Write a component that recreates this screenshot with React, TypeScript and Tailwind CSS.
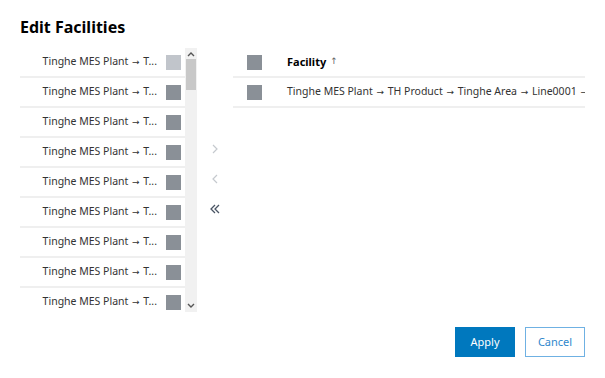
import React from "react";

const ROWS = Array.from({ length: 9 }, (_, i) => i);

function Box({ light = false }: { light?: boolean }) {
  return <div className={`w-[15px] h-[15px] shrink-0 ${light ? "bg-[#c1c5cb]" : "bg-[#8a9097]"}`} />;
}

function Arr() {
  return <span className="font-['DejaVu_Sans'] text-[9px] mx-[1px]">→</span>;
}

export default function App() {
  return (
    <div
      className="w-[605px] h-[378px] bg-white px-5 pt-[16px] text-[#1a1a1a] overflow-hidden"
      style={{ fontFamily: '"Noto Sans", "Open Sans", sans-serif' }}
    >
      <h1 className="text-[16px] font-bold leading-[22px] text-black">Edit Facilities</h1>

      <div className="flex mt-[10px] h-[264px]">
        {/* Available list */}
        <div className="flex w-[177px] shrink-0">
          <div className="w-[165px] overflow-hidden">
            {ROWS.map((i) => (
              <div
                key={i}
                className="h-[30px] flex items-center justify-end gap-[9px] pr-[4px] border-b-2 border-[#efefef]"
              >
                <span className="text-[10.5px] text-[#333] whitespace-nowrap">
                  Tinghe MES Plant <Arr /> T...
                </span>
                <Box light={i === 0} />
              </div>
            ))}
          </div>
          <div className="w-[12px] bg-[#f1f1f1] flex flex-col items-center">
            <svg className="mt-[3px]" width="8" height="6" viewBox="0 0 8 6">
              <path d="M1 5 L4 2 L7 5" stroke="#555" strokeWidth="1.4" fill="none" />
            </svg>
            <div className="mt-[2px] w-[10px] h-[31px] bg-[#c8c8c8]" />
            <div className="flex-1" />
            <svg className="mb-[3px]" width="8" height="6" viewBox="0 0 8 6">
              <path d="M1 1 L4 4 L7 1" stroke="#555" strokeWidth="1.4" fill="none" />
            </svg>
          </div>
        </div>

        {/* Transfer buttons */}
        <div className="w-[36px] shrink-0 flex flex-col items-center pt-[95px] gap-[18px] text-[#c5c9ce]">
          <svg width="12" height="12" viewBox="0 0 12 12">
            <path d="M4 2 L8 6 L4 10" stroke="currentColor" strokeWidth="1.2" fill="none" />
          </svg>
          <svg width="12" height="12" viewBox="0 0 12 12">
            <path d="M8 2 L4 6 L8 10" stroke="currentColor" strokeWidth="1.2" fill="none" />
          </svg>
          <svg width="12" height="12" viewBox="0 0 12 12">
            <path d="M6 2 L2 6 L6 10 M10 2 L6 6 L10 10" stroke="#4a5564" strokeWidth="1.3" fill="none" />
          </svg>
        </div>

        {/* Selected table */}
        <div className="w-[352px] overflow-hidden">
          <div className="h-[30px] flex items-center border-b-2 border-[#efefef] pl-[14px]">
            <Box />
            <span className="ml-[25px] text-[11px] font-bold text-black">Facility</span>
            <span className="ml-[4px] font-['DejaVu_Sans'] text-[9px] text-[#666]">↑</span>
          </div>
          <div className="h-[30px] flex items-center border-b-2 border-[#efefef] pl-[14px]">
            <Box />
            <span className="ml-[25px] text-[10.5px] text-[#333] whitespace-nowrap">
              Tinghe MES Plant <Arr /> TH Product <Arr /> Tinghe Area <Arr /> Line0001 <Arr /> Station
            </span>
          </div>
        </div>
      </div>

      <div className="flex justify-end gap-[10px] mt-[15px]">
        <button className="w-[60px] h-[30px] bg-[#0078be] text-white text-[11px]">Apply</button>
        <button className="w-[60px] h-[30px] border border-[#6fb1e3] text-[#2f88cc] text-[11px]">Cancel</button>
      </div>
    </div>
  );
}
